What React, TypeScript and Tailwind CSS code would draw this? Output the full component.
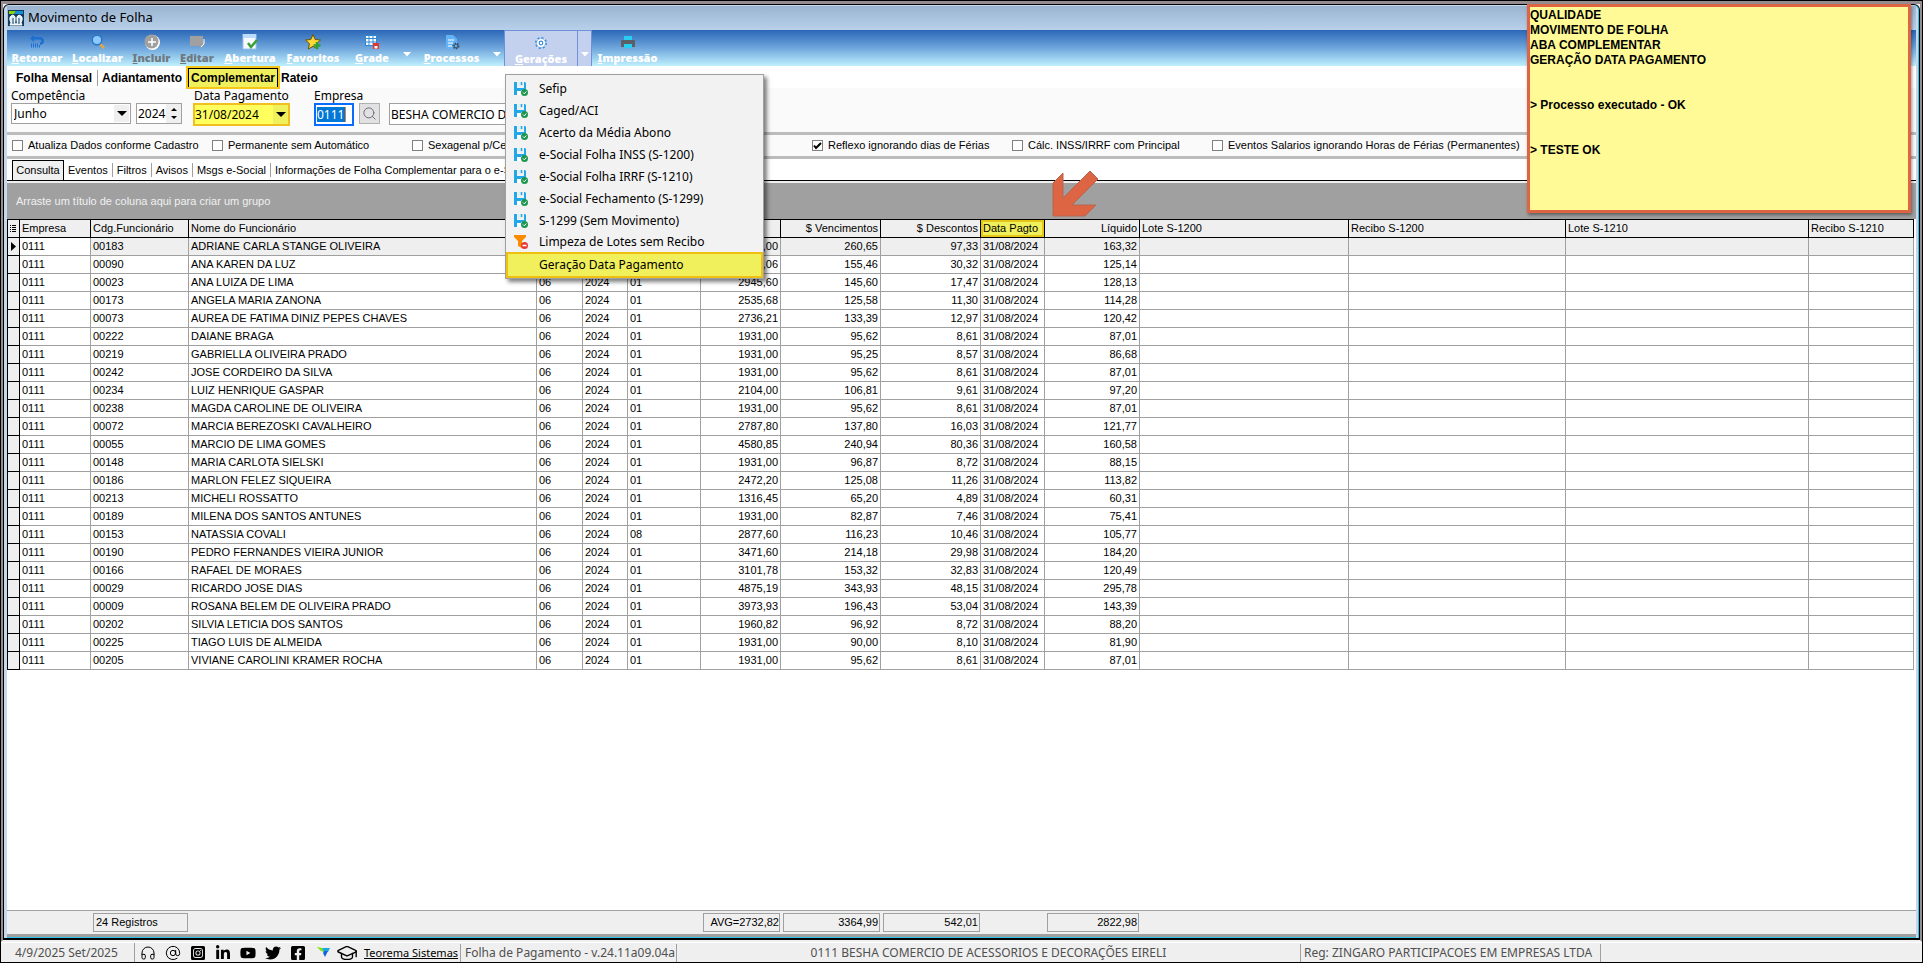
import React, { useState } from 'react';
import { AtSign, GraduationCap, Headphones, Search } from 'lucide-react';
import { FaFacebookSquare, FaInstagramSquare, FaLinkedinIn, FaTwitter, FaYoutube } from 'react-icons/fa';

const columns = [
  { title: 'Empresa', width: 'w-[71px]' },
  { title: 'Cdg.Funcionário', width: 'w-[98px]' },
  { title: 'Nome do Funcionário', width: 'w-[348px]' },
  { title: '', width: 'w-[46px]' },
  { title: '', width: 'w-[45px]' },
  { title: '', width: 'w-[73px]' },
  { title: '', width: 'w-[80px]', right: true },
  { title: '$ Vencimentos', width: 'w-[100px]', right: true },
  { title: '$ Descontos', width: 'w-[100px]', right: true },
  { title: 'Data Pagto', width: 'w-[64px]', marked: true },
  { title: 'Líquido', width: 'w-[95px]', right: true },
  { title: 'Lote S-1200', width: 'w-[209px]' },
  { title: 'Recibo S-1200', width: 'w-[217px]' },
  { title: 'Lote S-1210', width: 'w-[243px]' },
  { title: 'Recibo S-1210', width: '' },
];

// código, nome, seq, salário, vencimentos, descontos, líquido
const employees = [
  ['00183', 'ADRIANE CARLA STANGE OLIVEIRA', '01', '5215,00', '260,65', '97,33', '163,32'],
  ['00090', 'ANA KAREN DA LUZ', '01', '3143,06', '155,46', '30,32', '125,14'],
  ['00023', 'ANA LUIZA DE LIMA', '01', '2945,60', '145,60', '17,47', '128,13'],
  ['00173', 'ANGELA MARIA ZANONA', '01', '2535,68', '125,58', '11,30', '114,28'],
  ['00073', 'AUREA DE FATIMA DINIZ PEPES CHAVES', '01', '2736,21', '133,39', '12,97', '120,42'],
  ['00222', 'DAIANE BRAGA', '01', '1931,00', '95,62', '8,61', '87,01'],
  ['00219', 'GABRIELLA OLIVEIRA PRADO', '01', '1931,00', '95,25', '8,57', '86,68'],
  ['00242', 'JOSE CORDEIRO DA SILVA', '01', '1931,00', '95,62', '8,61', '87,01'],
  ['00234', 'LUIZ HENRIQUE GASPAR', '01', '2104,00', '106,81', '9,61', '97,20'],
  ['00238', 'MAGDA CAROLINE DE OLIVEIRA', '01', '1931,00', '95,62', '8,61', '87,01'],
  ['00072', 'MARCIA BEREZOSKI CAVALHEIRO', '01', '2787,80', '137,80', '16,03', '121,77'],
  ['00055', 'MARCIO DE LIMA GOMES', '01', '4580,85', '240,94', '80,36', '160,58'],
  ['00148', 'MARIA CARLOTA SIELSKI', '01', '1931,00', '96,87', '8,72', '88,15'],
  ['00186', 'MARLON FELEZ SIQUEIRA', '01', '2472,20', '125,08', '11,26', '113,82'],
  ['00213', 'MICHELI ROSSATTO', '01', '1316,45', '65,20', '4,89', '60,31'],
  ['00189', 'MILENA DOS SANTOS ANTUNES', '01', '1931,00', '82,87', '7,46', '75,41'],
  ['00153', 'NATASSIA COVALI', '08', '2877,60', '116,23', '10,46', '105,77'],
  ['00190', 'PEDRO FERNANDES VIEIRA JUNIOR', '01', '3471,60', '214,18', '29,98', '184,20'],
  ['00166', 'RAFAEL DE MORAES', '01', '3101,78', '153,32', '32,83', '120,49'],
  ['00029', 'RICARDO JOSE DIAS', '01', '4875,19', '343,93', '48,15', '295,78'],
  ['00009', 'ROSANA BELEM DE OLIVEIRA PRADO', '01', '3973,93', '196,43', '53,04', '143,39'],
  ['00202', 'SILVIA LETICIA DOS SANTOS', '01', '1960,82', '96,92', '8,72', '88,20'],
  ['00225', 'TIAGO LUIS DE ALMEIDA', '01', '1931,00', '90,00', '8,10', '81,90'],
  ['00205', 'VIVIANE CAROLINI KRAMER ROCHA', '01', '1931,00', '95,62', '8,61', '87,01'],
];

const menuItems = [
  'Sefip',
  'Caged/ACI',
  'Acerto da Média Abono',
  'e-Social Folha INSS (S-1200)',
  'e-Social Folha IRRF (S-1210)',
  'e-Social Fechamento (S-1299)',
  'S-1299 (Sem Movimento)',
];

const options = [
  { label: 'Atualiza Dados conforme Cadastro', checked: false },
  { label: 'Permanente sem Automático', checked: false },
  { label: 'Sexagenal p/Centesimal', checked: false },
  { label: '', checked: false },
  { label: 'Reflexo ignorando dias de Férias', checked: true },
  { label: 'Cálc. INSS/IRRF com Principal', checked: false },
  { label: 'Eventos Salarios ignorando Horas de Férias (Permanentes)', checked: false },
];

const svgProps = { width: 16, height: 16, viewBox: '0 0 16 16' };

const icons = {
  back: (
    <svg {...svgProps}>
      <path d="M1 4.500L5 1v2h6q4 .500 4 4t-4 4V8.500q1.500-.500 1.500-1.500T11 5.500H5V8z" fill="#1d6fd0" />
      <path d="M2.500 9.500v4M4.500 9.500v4M6.500 9.500v4M8.500 9.500v4M10.500 11v2.500" stroke="#1d6fd0" />
    </svg>
  ),
  find: (
    <svg {...svgProps}>
      <path d="M10 10L14 14" stroke="#e3a83c" strokeWidth="2.500" />
      <circle cx="7" cy="6" r="4.800" fill="#8cc8fa" stroke="#2878c8" strokeWidth="1.500" />
    </svg>
  ),
  add: (
    <svg {...svgProps}>
      <circle cx="8.500" cy="8.500" r="7.500" fill="#fff" />
      <circle cx="7.500" cy="7.500" r="7" fill="#a0a0a0" />
      <path d="M8 4v8M4 8h8" stroke="#fff" strokeWidth="1.500" />
    </svg>
  ),
  edit: (
    <svg {...svgProps}>
      <path d="M1 2h13v5l2 2-4 5-2-2H1z" fill="#a0a0a0" />
      <path d="M15 5v5l-3 3" stroke="#fff" fill="none" />
    </svg>
  ),
  open: (
    <svg {...svgProps}>
      <path d="M1 0h13v15H1z" fill="#f6faff" stroke="#9cc3ee" />
      <path d="M1 0h13v4H1z" fill="#bcdcff" />
      <path d="M6 9l3 4 6-7" fill="none" stroke="#3c9f35" strokeWidth="2.500" />
    </svg>
  ),
  star: (
    <svg {...svgProps}>
      <path d="M8 0.500l2.200 5 5.300.5-4 3.700 1.200 5.300L8 12.300 3.300 15l1.200-5.300-4-3.700 5.300-.5z" fill="#ffd836" stroke="#6b5200" />
      <path d="M12 8v7M8.500 11.500h7" stroke="#2f9e3b" strokeWidth="2.500" />
    </svg>
  ),
  grid: (
    <svg {...svgProps}>
      <path d="M1 1h12v11H1z" fill="#fff" />
      <path d="M1 1.500h12M1 4.500h12M1 8h12M1.500 1v11M5 1v11M9 1v11M12.500 1v8M1 11.500h8" fill="none" stroke="#2a8ad8" />
      <path d="M9 9h6v6H9z" fill="#e4372c" />
      <path d="M10.500 12h3v2.500h-3z" fill="#fff" />
    </svg>
  ),
  doc: (
    <svg {...svgProps}>
      <path d="M2 1h7l4 4v10H2z" fill="#63b4f6" />
      <path d="M4 6h6M4 9h5M4 12h4" stroke="#fff" />
      <circle cx="12" cy="12" r="2.500" fill="none" stroke="#3c556b" strokeWidth="2" strokeDasharray="1.500 1" />
      <circle cx="12" cy="12" r="1.800" fill="none" stroke="#3c556b" />
    </svg>
  ),
  gear: (
    <svg {...svgProps}>
      <circle cx="8" cy="8" r="5" fill="#fff" stroke="#3d8ad6" strokeWidth="2" strokeDasharray="2 1.900" />
      <circle cx="8" cy="8" r="4.500" fill="#fff" />
      <circle cx="8" cy="8" r="4.500" fill="none" stroke="#3d8ad6" strokeWidth="0.500" />
      <circle cx="8" cy="8" r="1.800" fill="#fff" stroke="#3d8ad6" strokeWidth="1.200" />
    </svg>
  ),
  print: (
    <svg {...svgProps}>
      <path d="M4 2h8v4H4z" fill="#29cdf2" />
      <path d="M1 6h14v7H1z" fill="#5b5f66" />
      <path d="M4 10h8v4H4z" fill="#29cdf2" />
    </svg>
  ),
};

const SaveIcon = () => (
  <svg {...svgProps}>
    <path d="M1 1h3v6h7V1h1l1 1v7H8v1H4v4H1z" fill="#22a7e8" />
    <path d="M5 1h5v4H5z" fill="#e3eef5" />
    <path d="M8.500 1v3" stroke="#22a7e8" strokeWidth="1.500" />
    <path d="M4 10h5v4H4z" fill="#fff" />
    <circle cx="11.500" cy="11.500" r="3.500" fill="#1d9650" />
    <path d="M10 11.500l1.300 1.300 2-2.300" fill="none" stroke="#fff" />
  </svg>
);

const FunnelIcon = () => (
  <svg {...svgProps}>
    <path d="M1 1h12v2L9 7v7l-4-2V7L1 3z" fill="#fb8c00" />
    <circle cx="11.500" cy="11.500" r="3.500" fill="#e53935" />
    <path d="M9.500 11.500h4" stroke="#fff" strokeWidth="1.500" />
  </svg>
);

interface ToolProps {
  label: string;
  icon: React.ReactNode;
  className: string;
}

const Tool: React.FC<ToolProps> = ({ label, icon, className }) => (
  <button type="button" className={`flex flex-col items-center pt-1 font-['Noto_Sans',sans-serif] text-[11px] leading-[15px] font-black ${className}`}>
    {icon}
    <span>
      <span className="underline">{label[0]}</span>
      {label.slice(1)}
    </span>
  </button>
);

const Drop: React.FC<{ label: string; className?: string }> = ({ label, className = '' }) => (
  <button type="button" aria-label={label} className={`flex w-[15px] items-center justify-center pt-3 ${className}`}>
    <svg width="8" height="5" viewBox="0 0 8 5"><path d="M0 0h8L4 4.500z" fill="#fff" /></svg>
  </button>
);

const Caret: React.FC<{ className: string }> = ({ className }) => (
  <span className={`pointer-events-none absolute top-[2px] right-[2px] bottom-[2px] flex w-[15px] items-center justify-center ${className}`}>
    <svg width="10" height="5" viewBox="0 0 10 5"><path d="M0 0h10L5 5z" fill="#000" /></svg>
  </span>
);

const subTabs = ['Eventos', 'Filtros', 'Avisos', 'Msgs e-Social', 'Informações de Folha Complementar para o e-Social'];

const Window: React.FC = () => {
  const [checks, setChecks] = useState(options.map(o => o.checked));

  return (
    <main className="flex min-h-0 flex-1 flex-col rounded-t-md border border-b-2 border-black bg-[#c4d8ec] px-[3px] pt-px shadow-[inset_-1px_0_0_#2cc5e8]">
      <header className="flex h-6 shrink-0 items-center gap-1 bg-linear-to-b from-[#9ab4d0] to-[#b8d0ea] pl-px font-['Noto_Sans',sans-serif] text-[13px]">
        <svg {...svgProps}>
          <path d="M0 0h16v16H0z" fill="#123a5c" />
          <path d="M1 1h7l-2 3H1z" fill="#8fd400" />
          <path d="M8 1h7v3H6z" fill="#148fd8" />
          <path d="M2 15q2-2 0-5-1-4 3-5 3 1 2 5-1 3 1 5zM14 15q-2-2 0-5 1-4-3-5-3 1-2 5 1 3-1 5z" fill="#dfeefa" stroke="#fff" />
          <path d="M5 8v6M11 8v6" stroke="#123a5c" />
        </svg>
        <h1>Movimento de Folha</h1>
      </header>

      <nav className="flex h-9 shrink-0 bg-linear-to-b from-[#2a67b6] via-[#6fa6dc] to-[#c0f0fd] text-white">
        <Tool label="Retornar" icon={icons.back} className="w-[60px]" />
        <Tool label="Localizar" icon={icons.find} className="w-[61px]" />
        <Tool label="Incluir" icon={icons.add} className="w-[47px] text-[#707880]" />
        <Tool label="Editar" icon={icons.edit} className="w-11 text-[#707880]" />
        <Tool label="Abertura" icon={icons.open} className="w-[62px]" />
        <Tool label="Favoritos" icon={icons.star} className="w-16" />
        <Tool label="Grade" icon={icons.grid} className="w-[54px]" />
        <Drop label="Opções de grade" />
        <Tool label="Processos" icon={icons.doc} className="w-[75px]" />
        <Drop label="Opções de processos" />
        <Tool label="Gerações" icon={icons.gear} className="w-[73px] border-t border-l border-[#7090d8] bg-[#c3d0ee]" />
        <Drop label="Opções de gerações" className="border-x border-t border-[#7090d8] bg-[#c3d0ee]" />
        <Tool label="Impressão" icon={icons.print} className="w-[71px]" />
      </nav>

      <div className="flex h-[22px] shrink-0 items-center bg-white pl-[9px] pt-px text-xs font-bold">
        <button type="button" className="pr-[5px]">Folha Mensal</button>
        <button type="button" className="border-l border-[#a0a0a0] px-1">Adiantamento</button>
        <button type="button" className="z-10 h-[23px] w-[94px] border-2 border-[#f5c518] bg-[#f0ef5c] shadow-[inset_1px_1px_0_#000,inset_-1px_0_0_#000]">Complementar</button>
        <button type="button" className="px-px">Rateio</button>
      </div>

      <form className="flex h-11 shrink-0 items-start bg-[#fafafa] pl-1 font-['Noto_Sans',sans-serif] text-xs leading-[15px]">
        <div className="w-[120px]">
          <label htmlFor="competencia">Competência</label>
          <div className="relative">
            <select id="competencia" className="h-[21px] w-full appearance-none border border-[#a0a0a0] bg-white pl-[2px]">
              <option>Junho</option>
            </select>
            <Caret className="bg-[#efefef]" />
          </div>
        </div>
        <div className="mt-[15px] ml-[5px] flex h-[21px] w-[46px] border border-[#a0a0a0] bg-white">
          <input aria-label="Ano" defaultValue="2024" className="w-[29px] pl-px" />
          <div className="flex flex-1 flex-col items-center justify-center gap-1 bg-[#efefef]">
            <button type="button" aria-label="Mais"><svg width="6" height="4" viewBox="0 0 6 4"><path d="M3 0l3 3H0z" /></svg></button>
            <button type="button" aria-label="Menos"><svg width="6" height="4" viewBox="0 0 6 4"><path d="M0 0h6L3 3z" /></svg></button>
          </div>
        </div>
        <div className="ml-[11px] w-[97px]">
          <label htmlFor="dataPagto" className="pl-px whitespace-nowrap">Data Pagamento</label>
          <div className="relative">
            <select id="dataPagto" className="h-[23px] w-full appearance-none border-2 border-[#f0c020] bg-[#ffff5e] px-0">
              <option>31/08/2024</option>
            </select>
            <Caret className="bg-[#f0ef5c]" />
          </div>
        </div>
        <div className="ml-6 w-10">
          <label htmlFor="empresa">Empresa</label>
          <div className="flex h-[23px] items-center border-2 border-[#0a6cff] bg-white pl-px">
            <input id="empresa" defaultValue="0111" className="h-[15px] w-[29px] border-r border-[#e08040] bg-[#0078d7] text-white" />
          </div>
        </div>
        <button type="button" aria-label="Pesquisar empresa" className="mt-[15px] ml-[5px] flex size-[21px] items-center justify-center border border-[#b0b0b0] bg-[#e1e1e1]">
          <Search size={15} strokeWidth={1.5} className="text-[#667]" />
        </button>
        <input aria-label="Nome da empresa" readOnly defaultValue="BESHA COMERCIO DE ACESSORIOS" className="mt-[15px] ml-[9px] h-[22px] w-[250px] border border-[#a0a0a0] bg-white pl-px" />
      </form>

      <div className="flex h-[27px] shrink-0 items-center border-y-3 border-[#bcbcbc] bg-[#fafafa] pl-[5px] text-[11px]">
        {options.map((option, i) => (
          <div key={i} className={i === 6 ? 'flex w-[320px] items-center' : 'flex w-[200px] items-center'}>
            {option.label && (
              <label className="flex items-center gap-1 whitespace-nowrap">
                <input
                  type="checkbox"
                  className="peer size-[11px] shrink-0 appearance-none border border-[#808080] bg-white"
                  checked={checks[i]}
                  onChange={() => setChecks(checks.map((c, j) => (j === i ? !c : c)))}
                />
                <svg width="9" height="8" viewBox="0 0 9 8" className="-mr-[1px] -ml-[14px] opacity-0 peer-checked:opacity-100">
                  <path d="M1 3.500l2 2.500 5-5" fill="none" stroke="#000" strokeWidth="2" />
                </svg>
                <span className="pl-[3px]">{option.label}</span>
              </label>
            )}
          </div>
        ))}
      </div>

      <div className="flex h-[22px] shrink-0 items-end border-b border-black bg-white pl-[5px] text-[11px]">
        <button type="button" className="h-5 w-[52px] border border-b-0 border-black bg-[#f0f0f0]">Consulta</button>
        {subTabs.map((tab, i) => (
          <button key={tab} type="button" className={`mb-[3px] px-1 leading-[14px] ${i > 0 ? 'border-l border-[#a0a0a0]' : ''}`}>{tab}</button>
        ))}
      </div>

      <section className="flex min-h-0 flex-1 flex-col border-b-3 border-[#a0a0a0] bg-white">
        <p className="flex h-[38px] shrink-0 items-center border-t-2 border-[#efefef] bg-[#a0a0a0] pl-[9px] text-[11px] text-[#f0f0f0]">
          Arraste um título de coluna aqui para criar um grupo
        </p>
        <div className="min-h-0 flex-1 overflow-hidden pr-[2px]">
          <table className="w-full table-fixed border-separate border-spacing-0 text-[11px] leading-[15px] whitespace-nowrap">
            <thead>
              <tr className="h-[19px] bg-[#efefef] text-left">
                <th className="w-[13px] border border-black p-0">
                  <svg width="9" height="10" viewBox="0 0 9 10"><path d="M2 1.500h1M4 1.500h4M2 3.500h1M4 3.500h4M2 5.500h1M4 5.500h4M2 7.500h1M4 7.500h4" stroke="#000" /></svg>
                </th>
                {columns.map((col, i) => (
                  <th
                    key={i}
                    className={`border-y border-r border-black p-0 px-[2px] font-normal ${col.width} ${col.right ? 'text-right' : ''} ${col.marked ? 'bg-[#f0ef5c] shadow-[0_0_0_2px_#e6c619_inset]' : ''}`}
                  >
                    {col.title}
                  </th>
                ))}
              </tr>
            </thead>
            <tbody>
              {employees.map(([code, name, seq, salary, earned, discount, net], row) => (
                <tr key={code} className={row === 0 ? 'h-[18px] bg-[#efefef]' : 'h-[18px]'}>
                  <td className="border-x border-b border-black bg-[#efefef] p-0">
                    {row === 0 && <svg width="9" height="9" viewBox="0 0 9 9"><path d="M3 0l5 4.500L3 9z" /></svg>}
                  </td>
                  {['0111', code, name, '06', '2024', seq, salary, earned, discount, '31/08/2024', net, '', '', '', ''].map((value, i) => (
                    <td
                      key={i}
                      className={`border-r border-b border-[#a0a0a0] p-0 px-[2px] ${columns[i].right ? 'text-right' : ''} ${i === 0 ? 'bg-white' : ''}`}
                    >
                      {value}
                    </td>
                  ))}
                </tr>
              ))}
            </tbody>
          </table>
        </div>
        <footer className="flex h-6 shrink-0 items-start border-t border-[#a0a0a0] bg-[#efefef] pt-[2px] pl-[86px] text-[11px] leading-[17px]">
          <div className="w-[95px] border border-[#a0a0a0] pl-[2px]">24 Registros</div>
          <div className="ml-[515px] w-[77px] border border-[#a0a0a0] text-right">AVG=2732,82</div>
          <div className="ml-[3px] w-[97px] border border-[#a0a0a0] pr-px text-right">3364,99</div>
          <div className="ml-[3px] w-[97px] border border-[#a0a0a0] pr-px text-right">542,01</div>
          <div className="ml-[67px] w-[92px] border border-[#a0a0a0] pr-px text-right">2822,98</div>
        </footer>
      </section>
      <div className="h-px shrink-0 bg-[#2cc5e8]" />
    </main>
  );
};

const StatusBar: React.FC = () => (
  <footer className="flex h-5 shrink-0 items-center border-t border-white bg-[#efefef] pt-px font-['Noto_Sans',sans-serif] text-xs text-[#505050]">
    <span className="w-[133px] pl-[14px]">4/9/2025 Set/2025</span>
    <div className="flex h-5 items-center gap-[9px] border-l border-[#a0a0a0] pl-[5px] text-black">
      <a href="#suporte" aria-label="Suporte"><Headphones size={16} strokeWidth={1.5} /></a>
      <a href="#email" aria-label="E-mail"><AtSign size={16} strokeWidth={1.5} /></a>
      <a href="#instagram" aria-label="Instagram"><FaInstagramSquare size={16} /></a>
      <a href="#linkedin" aria-label="LinkedIn"><FaLinkedinIn size={16} /></a>
      <a href="#youtube" aria-label="YouTube"><FaYoutube size={16} /></a>
      <a href="#twitter" aria-label="Twitter"><FaTwitter size={16} /></a>
      <a href="#facebook" aria-label="Facebook"><FaFacebookSquare size={16} /></a>
      <a href="#portal" aria-label="Portal">
        <svg {...svgProps}>
          <path d="M2 2l5 1 2 4-3-1z" fill="#7ee000" />
          <path d="M7 3h8l-2 4H9z" fill="#19a7e0" />
          <path d="M9 6h4l-3 6-2-4z" fill="#1762d8" />
        </svg>
      </a>
      <a href="#cursos" aria-label="Cursos"><GraduationCap size={22} strokeWidth={1.5} className="-ml-1" /></a>
    </div>
    <a href="#teorema" className="ml-[6px] w-[96px] text-[11px] whitespace-nowrap text-black underline">Teorema Sistemas</a>
    <span className="w-[216px] border-l border-[#a0a0a0] pl-1 leading-[18px] whitespace-nowrap">Folha de Pagamento - v.24.11a09.04a</span>
    <span className="w-[624px] border-l border-[#a0a0a0] text-center leading-[18px]">0111 BESHA COMERCIO DE ACESSORIOS E DECORAÇÕES EIRELI</span>
    <span className="w-[301px] border-x border-[#a0a0a0] pl-[3px] leading-[18px]">Reg: ZINGARO PARTICIPACOES EM EMPRESAS LTDA</span>
  </footer>
);

export default function App() {
  return (
    <div className="relative flex h-screen flex-col overflow-hidden border border-black bg-[#efefef] font-['Liberation_Sans',Arial,sans-serif] text-black">
      <div className="flex min-h-0 flex-1 flex-col border-2 border-t-3 border-[#948c90] border-b-[#efefef]">
        <Window />
      </div>
      <StatusBar />

      {/* Menu Gerações */}
      <div role="menu" className="absolute top-[73px] left-[504px] w-[259px] border border-[#a0a0a0] bg-[#f2f2f2] pt-[3px] font-['Noto_Sans',sans-serif] text-xs shadow-[3px_3px_4px_rgba(0,0,0,0.5)]">
        {menuItems.map(item => (
          <button key={item} type="button" role="menuitem" className="flex h-[22px] w-full items-center gap-[10px] pl-[7px]">
            <SaveIcon />
            {item}
          </button>
        ))}
        <button type="button" role="menuitem" className="flex h-5 w-full items-center gap-[10px] pl-[7px]">
          <FunnelIcon />
          Limpeza de Lotes sem Recibo
        </button>
        <button type="button" role="menuitem" className="flex h-[26px] w-full items-center border-2 border-[#f0c010] bg-[#f0ef5c] pl-[31px]">
          Geração Data Pagamento
        </button>
      </div>

      {/* Anotações */}
      <svg className="absolute top-[167px] left-[1049px]" width="52" height="52" viewBox="0 0 52 52">
        <path d="M40 3l8 8-26 26h24l-11 11H3V15L13 5v25z" fill="#dd6543" stroke="#b8664e" />
      </svg>
      <aside className="absolute top-[3px] right-[11px] h-[209px] w-[384px] border-3 border-[#dd6543] bg-[#fffa96] pt-px text-xs leading-[15px] font-bold shadow-[1px_2px_3px_rgba(0,0,0,0.4)]">
        <p>QUALIDADE</p>
        <p>MOVIMENTO DE FOLHA</p>
        <p>ABA COMPLEMENTAR</p>
        <p>GERAÇÃO DATA PAGAMENTO</p>
        <p className="mt-[30px]">&gt; Processo executado - OK</p>
        <p className="mt-[30px]">&gt; TESTE OK</p>
      </aside>
    </div>
  );
}
